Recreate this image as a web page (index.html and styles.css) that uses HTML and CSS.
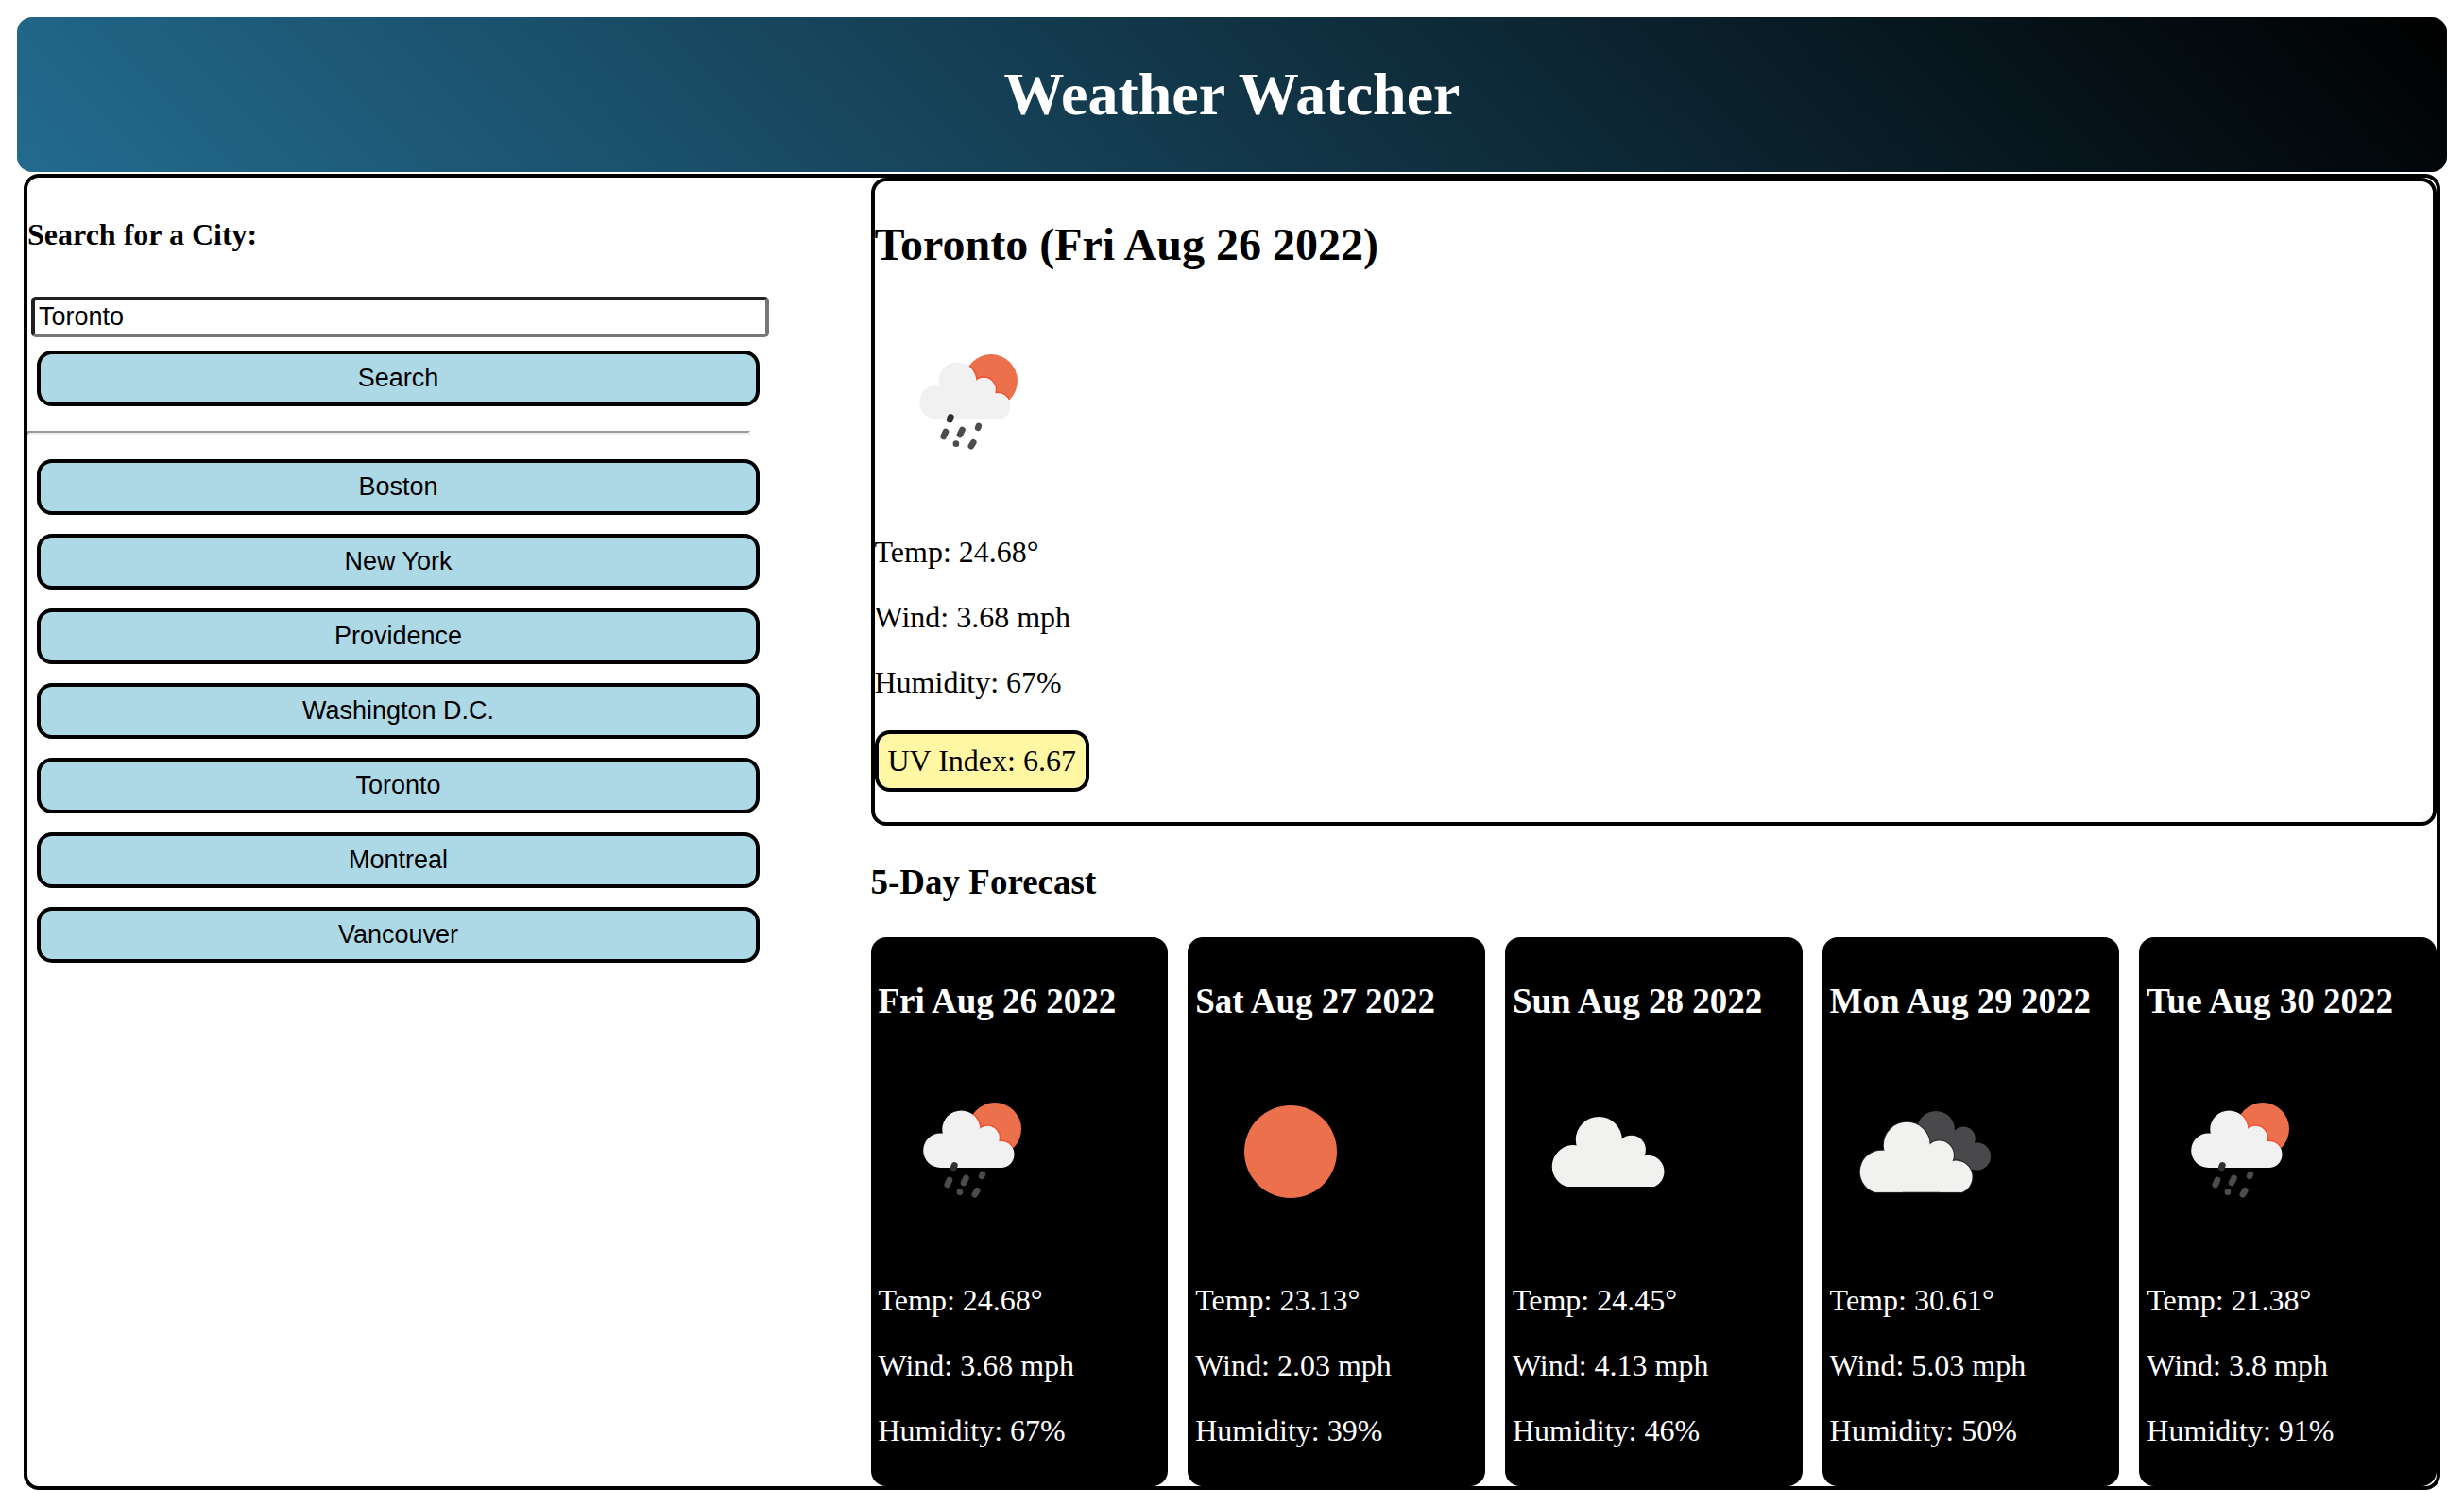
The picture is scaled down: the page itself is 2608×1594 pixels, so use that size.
FILE: index.html
```html
<!DOCTYPE html>
<html lang="en">
<head>
  <meta charset="UTF-8">
  <meta name="viewport" content="width=device-width, initial-scale=1">
  <title>Weather Watcher</title>
  <link rel="stylesheet" href="styles.css">
</head>
<body>
  <svg class="sprite" aria-hidden="true">
    <defs>
      <clipPath id="sun-clip"><circle cx="124" cy="77" r="28"/></clipPath>
      <g id="small-cloud">
        <circle cx="88.3" cy="77.5" r="20"/>
        <circle cx="66.5" cy="99.7" r="18.3"/>
        <circle cx="116.3" cy="86.3" r="12.5"/>
        <circle cx="130.5" cy="104" r="14"/>
        <path d="M66 118H131V98L116 84L90 74L70 92Z"/>
      </g>
      <g id="large-cloud">
        <circle cx="91.3" cy="88.5" r="24.5"/>
        <path d="M57 138A22.6 22.6 0 1 1 87 116V138Z"/>
        <circle cx="125.7" cy="99" r="15.2"/>
        <path d="M150 138A17.3 17.3 0 1 0 126 120V138Z"/>
        <path d="M57 138H150V118L126 98L92 86L68 108Z"/>
      </g>
      <symbol id="rain" viewBox="1 0 200 200">
        <circle cx="124" cy="77" r="28" fill="#ed704d"/>
        <g clip-path="url(#sun-clip)"><use href="#small-cloud" fill="#f05133" stroke="#f05133" stroke-width="3"/></g>
        <use href="#small-cloud" fill="#f1f1f1"/>
        <path d="M81.2 115.5L80.4 118" stroke="#303032" stroke-width="7" stroke-linecap="round"/>
        <path d="M76 131L73.7 136M93.5 129L91 134M110.8 125L110.2 126.8M86.9 143.6V143.8M105.3 142.3L102.8 146.2" stroke="#4c4c4e" stroke-width="6.6" stroke-linecap="round"/>
      </symbol>
      <symbol id="clear" viewBox="0 0 200 200">
        <circle cx="101" cy="101" r="49" fill="#ed704d"/>
      </symbol>
      <symbol id="cloudy" viewBox="0 0 200 200">
        <use href="#large-cloud" fill="#f1f1f0"/>
      </symbol>
      <symbol id="overcast" viewBox="0 0 200 200">
        <g fill="#49494b">
          <circle cx="112" cy="78" r="20"/>
          <circle cx="141.3" cy="87" r="12.5"/>
          <circle cx="155.7" cy="106" r="14.4"/>
          <path d="M112 78L141 84L158 96L150 120L112 110Z"/>
        </g>
        <g transform="translate(-10 5.7)">
          <use href="#large-cloud" fill="#222" stroke="#222" stroke-width="2"/>
          <use href="#large-cloud" fill="#f1f1f0"/>
        </g>
      </symbol>
    </defs>
  </svg>

  <header class="banner">
    <h1>Weather Watcher</h1>
  </header>

  <div class="dashboard">
    <aside class="sidebar">
      <form class="search" onsubmit="return false">
        <h4><label for="city">Search for a City:</label></h4>
        <input class="city-input" id="city" type="text" value="Toronto">
        <button class="btn" type="submit">Search</button>
      </form>
      <hr class="divider">
      <nav class="history" aria-label="Cities">
        <button class="btn" type="button">Boston</button>
        <button class="btn" type="button">New York</button>
        <button class="btn" type="button">Providence</button>
        <button class="btn" type="button">Washington D.C.</button>
        <button class="btn" type="button">Toronto</button>
        <button class="btn" type="button">Montreal</button>
        <button class="btn" type="button">Vancouver</button>
      </nav>
    </aside>

    <main class="weather">
      <section class="today">
        <h2>Toronto (Fri Aug 26 2022)</h2>
        <svg class="icon" role="img" aria-label="Rain"><use href="#rain"/></svg>
        <p>Temp: 24.68°</p>
        <p>Wind: 3.68 mph</p>
        <p>Humidity: 67%</p>
        <p class="uv">UV Index: 6.67</p>
      </section>

      <h3>5-Day Forecast</h3>
      <section class="forecast">
        <article class="day">
          <h3>Fri Aug 26 2022</h3>
          <svg class="icon" role="img" aria-label="Rain"><use href="#rain"/></svg>
          <p>Temp: 24.68°</p>
          <p>Wind: 3.68 mph</p>
          <p>Humidity: 67%</p>
        </article>
        <article class="day">
          <h3>Sat Aug 27 2022</h3>
          <svg class="icon" role="img" aria-label="Clear"><use href="#clear"/></svg>
          <p>Temp: 23.13°</p>
          <p>Wind: 2.03 mph</p>
          <p>Humidity: 39%</p>
        </article>
        <article class="day">
          <h3>Sun Aug 28 2022</h3>
          <svg class="icon" role="img" aria-label="Cloudy"><use href="#cloudy"/></svg>
          <p>Temp: 24.45°</p>
          <p>Wind: 4.13 mph</p>
          <p>Humidity: 46%</p>
        </article>
        <article class="day">
          <h3>Mon Aug 29 2022</h3>
          <svg class="icon" role="img" aria-label="Overcast"><use href="#overcast"/></svg>
          <p>Temp: 30.61°</p>
          <p>Wind: 5.03 mph</p>
          <p>Humidity: 50%</p>
        </article>
        <article class="day">
          <h3>Tue Aug 30 2022</h3>
          <svg class="icon" role="img" aria-label="Rain"><use href="#rain"/></svg>
          <p>Temp: 21.38°</p>
          <p>Wind: 3.8 mph</p>
          <p>Humidity: 91%</p>
        </article>
      </section>
    </main>
  </div>
</body>
</html>
```
FILE: styles.css
```css
body {
  margin: 16px;
  background: #fff;
  color: #000;
  font-family: "Liberation Serif", "Times New Roman", serif;
  font-size: 32px;
  line-height: 37px;
}

.sprite {
  position: absolute;
  width: 0;
  height: 0;
}

.banner {
  margin: 2px;
  padding: 45px 0;
  border-radius: 16px;
  background: linear-gradient(45deg, #236b8f, #000);
  color: #fff;
  text-align: center;
}

h1 {
  margin: 0;
  font-size: 64px;
  line-height: 74px;
}

h2 {
  margin: 39px 0 40px;
  font-size: 48px;
  line-height: 55px;
}

h3 {
  margin: 38px 0 37px;
  font-size: 37px;
  line-height: 43px;
}

h4 {
  margin: 42px 0 43px;
  font-size: 32px;
}

p {
  margin: 32px 0;
}

.dashboard {
  display: grid;
  grid-template-columns: 30% 65%;
  justify-content: space-between;
  margin: 0 9px;
  border: 4px solid #000;
  border-radius: 16px;
}

.search,
.history {
  display: flex;
  flex-direction: column;
}

.city-input {
  box-sizing: content-box;
  width: 100%;
  height: 31px;
  margin: 4px;
  padding: 2px 4px;
  border: 4px solid;
  border-color: #212121 #767676 #767676 #212121;
  border-radius: 5px;
  background: #fff;
  color: #000;
  font: 27px/31px "Liberation Sans", Arial, sans-serif;
}

.btn {
  box-sizing: border-box;
  width: 100%;
  margin: 10px;
  padding: 10px;
  border: 4px solid #000;
  border-radius: 16px;
  background: lightblue;
  color: #000;
  font: 27px/31px "Liberation Sans", Arial, sans-serif;
}

.divider {
  margin: 16px 0;
  border: 2px solid;
  border-color: #9a9a9a #eee #eee #9a9a9a;
}

.today {
  display: flow-root;
  border: 4px solid #000;
  border-radius: 16px;
}

.icon {
  display: block;
  width: 200px;
  height: 200px;
  margin-bottom: 40px;
}

.uv {
  width: fit-content;
  padding: 10px;
  border: 4px solid #000;
  border-radius: 16px;
  background: #fff7a3;
}

.forecast {
  display: grid;
  grid-template-columns: repeat(5, minmax(0, 1fr));
  gap: 21px;
}

.day {
  display: flow-root;
  padding: 8px;
  border-radius: 16px;
  background: #000;
  color: #fff;
}
```
